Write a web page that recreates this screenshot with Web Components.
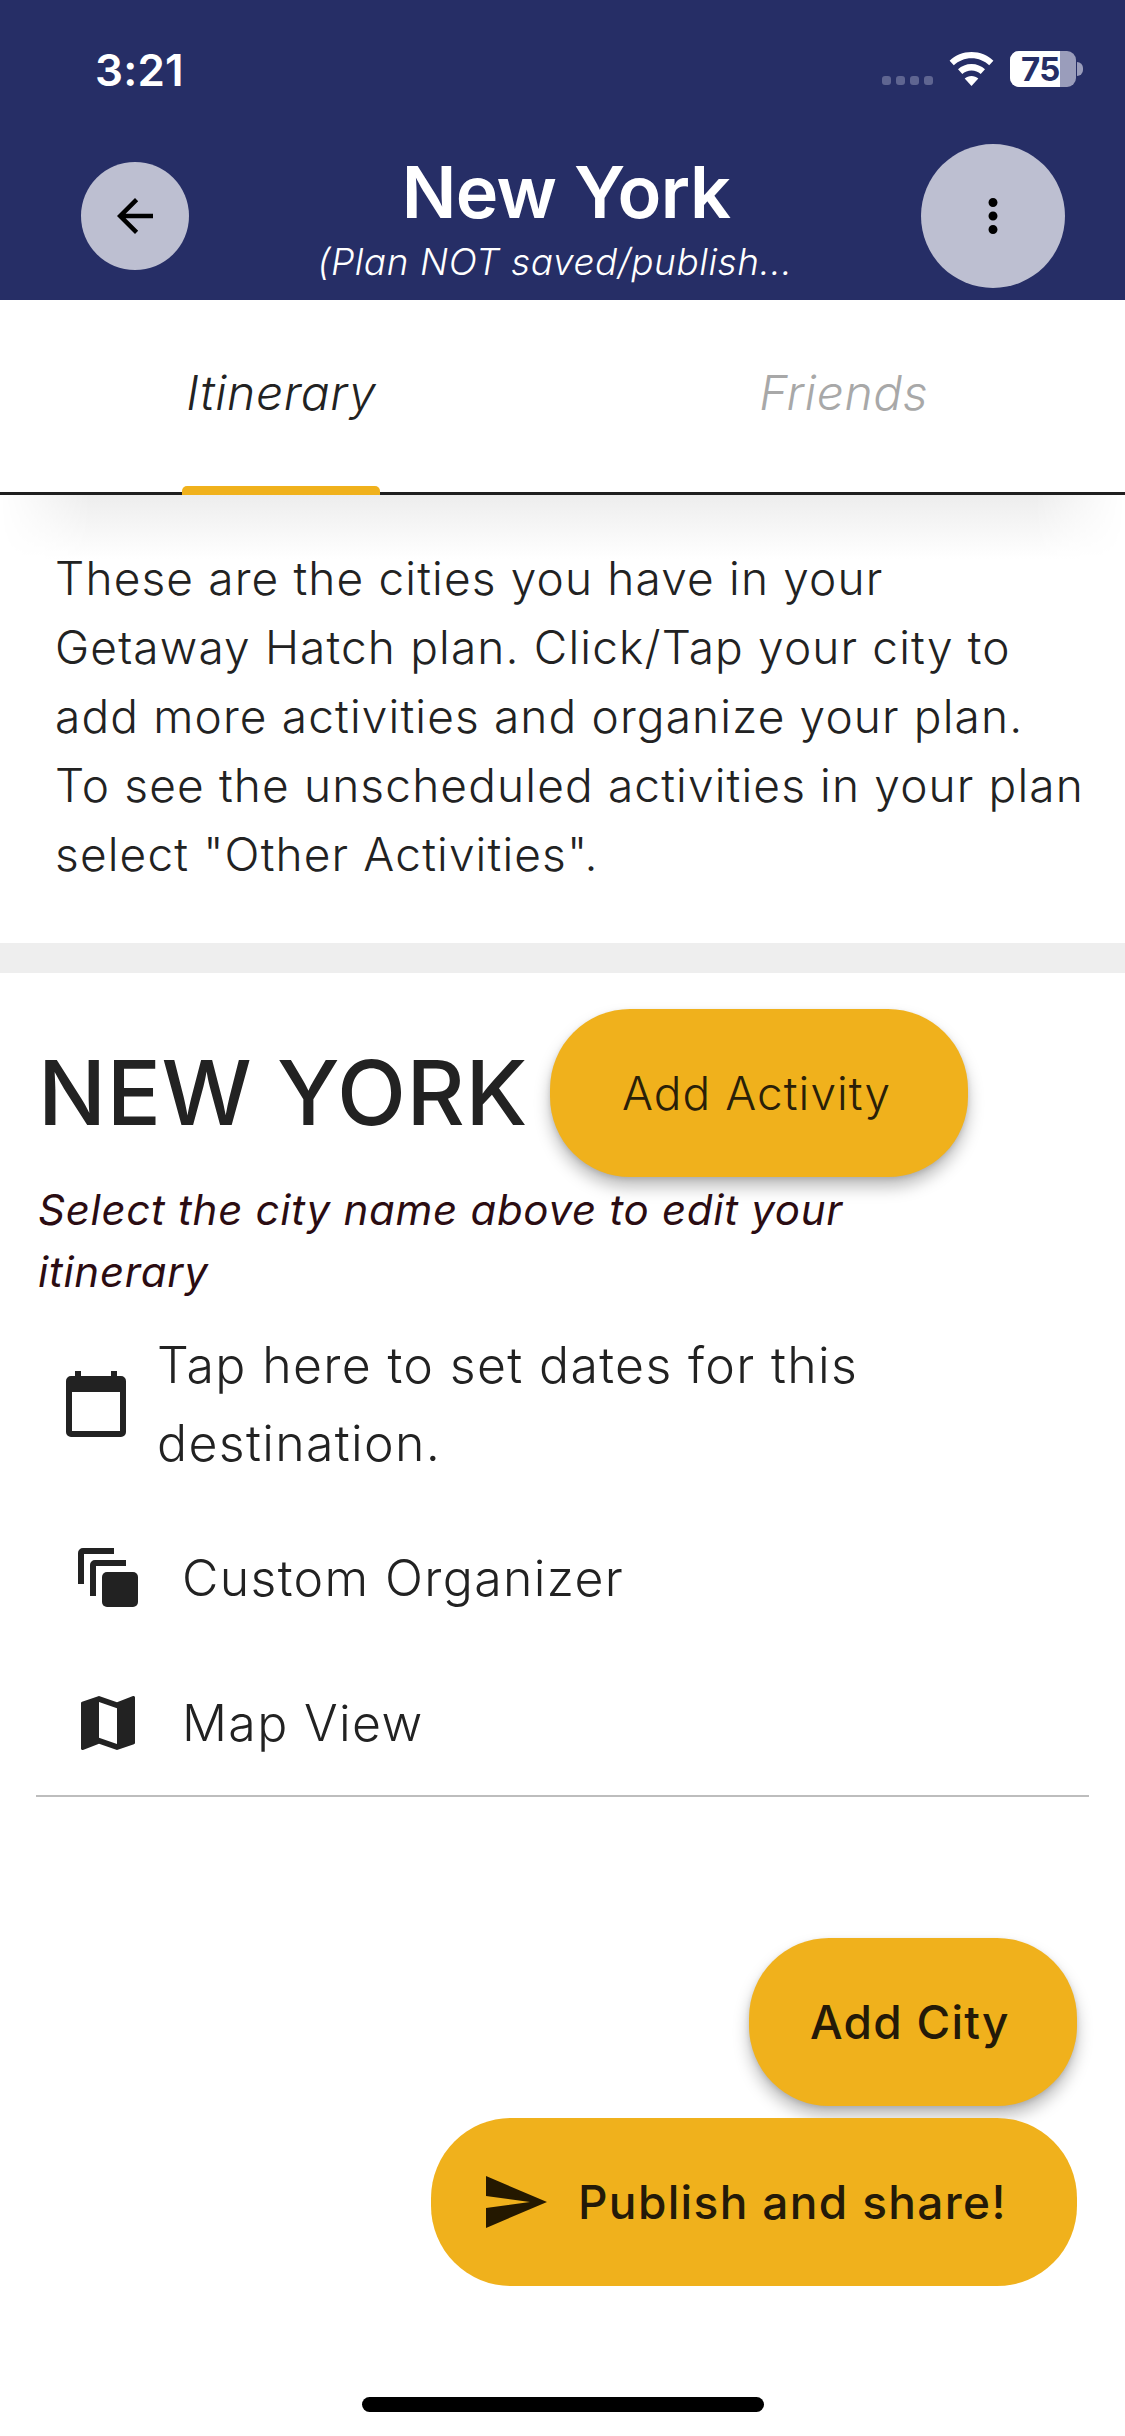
<!DOCTYPE html>
<html><head><meta charset="utf-8">
<style>
html,body{margin:0;padding:0;background:#fff}
body{font-family:Inter,"Liberation Sans",sans-serif}
</style></head>
<body>
<app-page>
  <app-header title="New York" sub="(Plan NOT saved/publish..."></app-header>
  <tab-bar></tab-bar>
  <intro-text>These are the cities you have in your Getaway Hatch plan. Click/Tap your city to add more activities and organize your plan. To see the unscheduled activities in your plan select "Other Activities".</intro-text>
  <city-card></city-card>
</app-page>
<script>
const FONT='Inter,"Liberation Sans",sans-serif';
function def(name,html,init){
  customElements.define(name,class extends HTMLElement{
    constructor(){super();this.attachShadow({mode:'open'}).innerHTML=html;}
    connectedCallback(){if(init)init(this);}
  });
}
def('app-page',`<style>
:host{display:block;position:relative;width:1125px;height:2436px;overflow:hidden;background:#fff}
.fabs{position:absolute;right:48px;bottom:150px;display:flex;flex-direction:column;align-items:flex-end;gap:12px}
.home{position:absolute;left:362px;top:2397px;width:402px;height:15px;border-radius:8px;background:#000}
</style><slot></slot>
<div class="fabs"><fab-button w="328" shadow text-left="61" fs="46" ls="1.25">Add City</fab-button><fab-button w="646" icon text-left="147" fs="46" ls="1.35">Publish and share!</fab-button></div>
<div class="home"></div>`);

def('status-bar',`<style>
:host{display:flex;height:144px;box-sizing:border-box;position:relative;color:#fff;font-family:${FONT}}
.time{position:absolute;left:95px;top:44px;font:600 44px/52px ${FONT};letter-spacing:.2px}
.right{position:absolute;left:882px;top:51px;width:205px;height:36px;display:flex;align-items:flex-start}
.dots{display:flex;gap:5px;margin-top:25px}
.dots i{width:9px;height:9px;border-radius:3px;background:#5f6591}
svg{display:block;margin-left:16px}
.bat{position:relative;margin-left:16px;width:66px;height:36px;border-radius:9px;overflow:hidden;background:#9a9dbb}
.bat b{position:absolute;left:0;top:0;width:50px;height:36px;background:#fff}
.bat span{position:absolute;left:11px;top:0;font:700 33px/36px ${FONT};color:#262e66;letter-spacing:-.5px}
.tip{width:6px;height:14px;margin:11px 0 0 1px;border-radius:0 6px 6px 0;background:#9a9dbb}
</style>
<div class="time">3:21</div>
<div class="right"><div class="dots"><i></i><i></i><i></i><i></i></div>
<svg width="45" height="36" viewBox="0 0 45 36"><path fill="#fff" d="M22.5 1C14 1 6.300 4.300.6 9.700l4.200 4.600C9.400 10 15.600 7.300 22.500 7.300S35.600 10 40.200 14.300l4.200-4.600C38.700 4.300 31 1 22.500 1z"/><path fill="#fff" d="M22.500 13c-5.200 0-9.900 2-13.500 5.300l4.300 4.600c2.400-2.200 5.600-3.500 9.200-3.500s6.800 1.300 9.200 3.500l4.300-4.600C32.400 15 27.700 13 22.500 13z"/><path fill="#fff" d="M22.500 25c-2.600 0-5 1-6.800 2.600l6.800 7.400 6.800-7.400C27.500 26 25.100 25 22.500 25z"/></svg>
<div class="bat"><b></b><span>75</span></div><div class="tip"></div></div>`);

def('circle-button',`<style>
:host{display:flex;align-items:center;justify-content:center;border-radius:50%;background:#bdbfd1;flex:none}
svg{display:block}
</style><slot></slot>`,el=>{const s=el.getAttribute('size');el.style.width=s+'px';el.style.height=s+'px';});

def('app-header',`<style>
:host{display:block;height:300px;background:#262e66;color:#fff}
.bar{display:flex;align-items:center;height:144px;padding:0 60px 0 81px}
.mid{flex:1;min-width:0;display:flex;flex-direction:column;align-items:center;height:144px;overflow:visible}
.t{font:600 72px/96px ${FONT};letter-spacing:-.6px;padding-left:22px;white-space:nowrap}
.s{font:italic 300 37px/44px ${FONT};letter-spacing:.55px;white-space:nowrap}
</style>
<status-bar></status-bar>
<div class="bar">
<circle-button size="108"><svg width="54" height="54" viewBox="0 0 24 24"><path d="M20 11H7.830l5.590-5.590L12 4l-8 8 8 8 1.410-1.410L7.830 13H20z"/></svg></circle-button>
<div class="mid"><div class="t"></div><div class="s"></div></div>
<circle-button size="144"><svg width="54" height="54" viewBox="0 0 24 24"><path d="M12 8c1.100 0 2-.9 2-2s-.9-2-2-2-2 .9-2 2 .9 2 2 2zm0 2c-1.100 0-2 .9-2 2s.9 2 2 2 2-.9 2-2-.9-2-2-2zm0 6c-1.100 0-2 .9-2 2s.9 2 2 2 2-.9 2-2-.9-2-2-2z"/></svg></circle-button>
</div>`,el=>{const r=el.shadowRoot;r.querySelector('.t').textContent=el.getAttribute('title');r.querySelector('.s').textContent=el.getAttribute('sub');el.removeAttribute('title');});

def('tab-bar',`<style>
:host{display:flex;height:195px;box-sizing:border-box;border-bottom:3px solid #1f1f1f;font:italic 300 48px/60px ${FONT};letter-spacing:.6px}
.tab{flex:1;display:flex;justify-content:center;padding-top:63px;position:relative;color:#222}
.tab.off{color:#a8a8a8}
.ind{position:absolute;left:182px;width:198px;top:186px;height:9px;background:#f0b11c;border-radius:5px 5px 0 0}
</style><div class="tab">Itinerary<div class="ind"></div></div><div class="tab off">Friends</div>`);

def('intro-text',`<style>
:host{display:block;position:relative;height:478px;box-sizing:border-box;padding:49px 40px 0 55px;font:300 46px/69px ${FONT};letter-spacing:1.15px;color:#222;border-bottom:30px solid #eee}
.sh{position:absolute;left:0;right:0;top:0;height:64px;background:linear-gradient(#ededed,#fff);-webkit-mask:linear-gradient(90deg,transparent,#000 90px,#000 1035px,transparent)}
.tx{position:relative}
</style><div class="sh"></div><div class="tx"><slot></slot></div>`);

const ICONS={
 cal:`<svg width="60" height="66" viewBox="0 0 60 66"><path fill="#222" fill-rule="evenodd" d="M9 0h6v5h30V0h6v5h4a5 5 0 0 1 5 5v51a5 5 0 0 1-5 5H5a5 5 0 0 1-5-5V10a5 5 0 0 1 5-5h4zM6 21v39h48V21z"/></svg>`,
 copy:`<svg width="60" height="60" viewBox="0 0 60 60"><path fill="#222" d="M0 36V5a5 5 0 0 1 5-5h31v6H6v30z"/><path fill="#222" d="M12 48V17a5 5 0 0 1 5-5h31v6H18v30z"/><rect fill="#222" x="24" y="24" width="36" height="35" rx="5"/></svg>`,
 map:`<svg width="72" height="72" viewBox="0 0 24 24"><path fill="#222" d="M20.500 3l-.16.03L15 5.100 9 3 3.360 4.900c-.21.07-.36.25-.36.48V20.500c0 .28.22.5.5.5l.16-.03L9 18.900l6 2.100 5.640-1.900c.21-.07.36-.25.36-.48V3.500c0-.28-.22-.5-.5-.5zM15 19l-6-2.110V5l6 2.110V19z"/></svg>`
};
def('action-row',`<style>
:host{display:flex;align-items:center;font:300 50px/78px ${FONT};letter-spacing:1.35px;color:#222}
.ic{display:flex;flex:none;align-items:center;justify-content:center}
</style><div class="ic"></div><div class="tx"><slot></slot></div>`,el=>{
  const r=el.shadowRoot,ic=r.querySelector('.ic');ic.innerHTML=ICONS[el.getAttribute('icon')];
  ic.style.marginLeft=el.getAttribute('ml')+'px';
  ic.style.marginRight=el.getAttribute('mr')+'px';
  el.style.height=el.getAttribute('h')?el.getAttribute('h')+'px':'';
});

def('city-card',`<style>
:host{display:block;padding:36px 36px 0 0;color:#222}
.head{display:flex;align-items:center;height:168px;padding-left:38px}
h2{flex:0 0 512px;margin:0;font:500 90px/100px ${FONT};letter-spacing:.6px;white-space:nowrap}
.note{margin:2px 0 23px 38px;font:italic 400 42px/62px ${FONT};letter-spacing:.72px;color:#2b0c12;width:960px}
.div{height:2px;background:#bdbdbd;margin-left:36px}
</style>
<div class="head"><h2>NEW YORK</h2><fab-button w="418" shadow light text-left="72" fs="46" ls="1.05">Add Activity</fab-button></div>
<div class="note">Select the city name above to edit your itinerary</div>
<action-row icon="cal" ml="66" mr="31">Tap here to set dates for this<br>destination.</action-row>
<action-row icon="copy" ml="78" mr="44" h="144" style="margin-top:24px">Custom Organizer</action-row>
<action-row icon="map" ml="72" mr="38" h="145">Map View</action-row>
<div class="div"></div>`);

def('fab-button',`<style>
:host{display:flex;align-items:center;height:168px;box-sizing:border-box;border-radius:80px;background:#f0b11c;color:#241a08;font-family:${FONT};font-weight:500;white-space:nowrap;flex:none}
:host([shadow]){box-shadow:0 10px 16px rgba(0,0,0,.26),0 2px 5px rgba(0,0,0,.12)}
:host([light]){font-weight:300;color:#2a2008}
svg{display:block;margin-left:55px;flex:none}
</style><svg width="61" height="52" viewBox="0 0 61 52" hidden><path fill="#241800" d="M0 0l61 26L0 52V32l44-6L0 20z"/></svg><slot></slot>`,el=>{
  el.style.width=el.getAttribute('w')+'px';
  el.style.fontSize=el.getAttribute('fs')+'px';
  el.style.letterSpacing=el.getAttribute('ls')+'px';
  const icon=el.hasAttribute('icon'),svg=el.shadowRoot.querySelector('svg');
  if(icon){svg.removeAttribute('hidden');svg.style.marginRight=(+el.getAttribute('text-left')-116)+'px';}
  else{svg.style.display='none';el.style.paddingLeft=el.getAttribute('text-left')+'px';}
});
</script>
</body></html>
